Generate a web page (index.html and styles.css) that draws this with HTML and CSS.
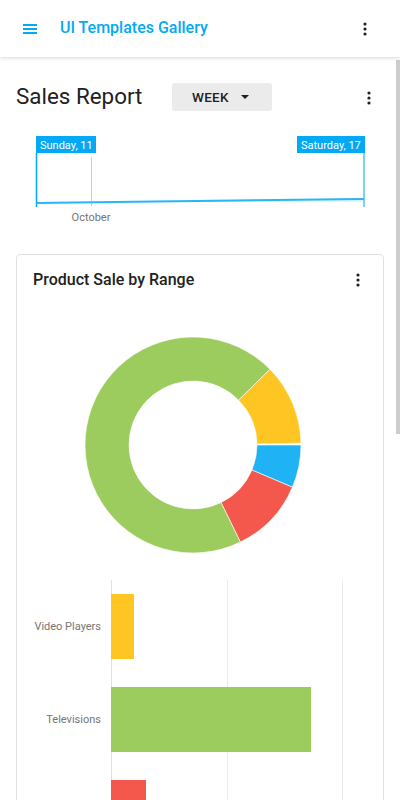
FILE: index.html
```html
<!DOCTYPE html>
<html lang="en">
<head>
<meta charset="utf-8">
<title>UI Templates Gallery</title>
<link rel="stylesheet" href="styles.css">
</head>
<body>
<div class="page">
  <header class="appbar">
    <svg class="menu-icon" width="14" height="10" viewBox="0 0 14 10"><rect x="0" y="0" width="14" height="2" fill="#03a9f4"/><rect x="0" y="4" width="14" height="2" fill="#03a9f4"/><rect x="0" y="8" width="14" height="2" fill="#03a9f4"/></svg>
    <h1 class="app-title">UI Templates Gallery</h1>
    <svg class="kebab kebab-app" width="4" height="14" viewBox="0 0 4 14"><circle cx="2" cy="2" r="1.6" fill="#212121"/><circle cx="2" cy="7" r="1.6" fill="#212121"/><circle cx="2" cy="12" r="1.6" fill="#212121"/></svg>
  </header>

  <main class="content">
    <div class="report-head">
      <h2 class="report-title">Sales Report</h2>
      <div class="week-btn"><span>WEEK</span><svg width="8" height="4" viewBox="0 0 8 4"><path d="M0 0 L8 0 L4 4 Z" fill="#212121"/></svg></div>
      <svg class="kebab kebab-report" width="4" height="14" viewBox="0 0 4 14"><circle cx="2" cy="2" r="1.6" fill="#212121"/><circle cx="2" cy="7" r="1.6" fill="#212121"/><circle cx="2" cy="12" r="1.6" fill="#212121"/></svg>
    </div>

    <svg class="timeline" width="368" height="100" viewBox="0 0 368 100">
      <line x1="75.5" y1="27" x2="75.5" y2="76" stroke="#cccccc" stroke-width="1"/>
      <path d="M20.5 72 L348 68 L348 72 Z" fill="#e1f5fe"/>
      <line x1="20.5" y1="23" x2="20.5" y2="77" stroke="#03a9f4" stroke-width="1.5"/>
      <line x1="348" y1="23" x2="348" y2="77" stroke="#4fc3f7" stroke-width="1.5"/>
      <path d="M20.5 73 L348 69" stroke="#29b6f6" stroke-width="2" fill="none"/>
      <rect x="20" y="6" width="60" height="17" fill="#03a9f4"/>
      <text x="24" y="18.5" class="tl-label">Sunday, 11</text>
      <rect x="281" y="6" width="68" height="17" fill="#03a9f4"/>
      <text x="285" y="18.5" class="tl-label">Saturday, 17</text>
      <text x="75" y="91" text-anchor="middle" class="tl-axis">October</text>
    </svg>

    <section class="card">
      <div class="card-head">
        <h3 class="card-title">Product Sale by Range</h3>
        <svg class="kebab" width="4" height="14" viewBox="0 0 4 14"><circle cx="2" cy="2" r="1.6" fill="#212121"/><circle cx="2" cy="7" r="1.6" fill="#212121"/><circle cx="2" cy="12" r="1.6" fill="#212121"/></svg>
      </div>

      <svg class="donut" width="366" height="278" viewBox="0 0 366 278">
        <path d="M284,153 A108,108 0 0 1 275.41,195.20 L234.91,178.01 A64,64 0 0 0 240,153 Z" fill="#1fb3f5" stroke="#fff" stroke-width="0.6"/>
        <path d="M275.41,195.20 A108,108 0 0 1 223.34,250.07 L204.06,210.52 A64,64 0 0 0 234.91,178.01 Z" fill="#f4584c" stroke="#fff" stroke-width="0.6"/>
        <path d="M223.34,250.07 A108,108 0 1 1 253.03,77.31 L221.65,108.14 A64,64 0 1 0 204.06,210.52 Z" fill="#9ccb5e" stroke="#fff" stroke-width="0.6"/>
        <path d="M253.03,77.31 A108,108 0 0 1 283.99,151.2 L239.99,151.9 A64,64 0 0 0 221.65,108.14 Z" fill="#ffc623" stroke="#fff" stroke-width="0.6"/>
      </svg>

      <svg class="bars" width="366" height="240" viewBox="0 0 366 240">
        <line x1="94.5" y1="10" x2="94.5" y2="240" stroke="#e0e0e0"/>
        <line x1="210.5" y1="10" x2="210.5" y2="240" stroke="#ebebeb"/>
        <line x1="325.5" y1="10" x2="325.5" y2="240" stroke="#ebebeb"/>
        <rect x="94" y="24" width="23" height="65" fill="#ffc623"/>
        <rect x="94" y="117" width="200" height="65" fill="#9ccb5e"/>
        <rect x="94" y="210" width="35" height="30" fill="#f4584c"/>
        <text x="84" y="60" text-anchor="end" class="bar-label">Video Players</text>
        <text x="84" y="153" text-anchor="end" class="bar-label">Televisions</text>
      </svg>
    </section>
  </main>

  <div class="scroll-thumb"></div>
</div>
</body>
</html>
```

FILE: styles.css
```css
html, body {
  margin: 0;
  padding: 0;
  overflow: hidden;
  background: #ffffff;
}

body {
  font-family: Roboto, "Noto Sans", "Liberation Sans", sans-serif;
  color: #212121;
}

.page {
  position: relative;
  height: 800px;
  overflow: hidden;
}

.appbar {
  position: relative;
  z-index: 1;
  height: 57px;
  display: flex;
  align-items: center;
  padding-left: 23px;
  background: #ffffff;
  box-shadow: 0 1px 4px rgba(0, 0, 0, 0.16);
}

.menu-icon {
  display: block;
  margin-top: 1px;
  margin-right: 23px;
}

.app-title {
  margin: 0;
  font-size: 16px;
  font-weight: 500;
  color: #03a9f4;
  line-height: 20px;
  margin-top: -2px;
}

.kebab {
  display: block;
  flex: none;
}

.kebab-app {
  margin-left: auto;
  margin-right: 33px;
  margin-top: 1px;
}

.content {
  padding: 0 16px;
}

.report-head {
  display: flex;
  align-items: center;
  height: 28px;
  margin-top: 26px;
}

.report-title {
  margin: 0;
  width: 156px;
  flex: none;
  font-size: 22.4px;
  font-weight: 400;
  line-height: 28px;
  color: #212121;
  margin-top: -3px;
}

.week-btn {
  width: 100px;
  height: 28px;
  box-sizing: border-box;
  padding-left: 20px;
  display: flex;
  align-items: center;
  background: #ebebeb;
  border-radius: 3px;
  font-size: 13.5px;
  font-weight: 500;
  letter-spacing: 0.3px;
  color: #212121;
}

.week-btn svg {
  margin-left: 12px;
}

.kebab-report {
  margin-left: auto;
  margin-right: 13px;
  margin-top: 2px;
}

.timeline {
  display: block;
  margin-top: 19px;
}

.tl-label {
  font-size: 11px;
  fill: #ffffff;
  font-family: Roboto, "Liberation Sans", sans-serif;
}

.tl-axis {
  font-size: 11px;
  fill: #757575;
  font-family: Roboto, "Liberation Sans", sans-serif;
}

.card {
  margin-top: 24px;
  border: 1px solid #e0e0e0;
  border-radius: 4px;
  height: 800px;
}

.card-head {
  display: flex;
  align-items: center;
  justify-content: space-between;
  padding: 13px 23px 0 16px;
}

.card-title {
  margin: 0;
  font-size: 16px;
  font-weight: 500;
  line-height: 24px;
  color: #212121;
}

.donut,
.bars {
  display: block;
}

.bar-label {
  font-size: 11px;
  fill: #757575;
  font-family: Roboto, "Liberation Sans", sans-serif;
}

.scroll-thumb {
  position: absolute;
  right: 0;
  top: 60px;
  width: 4px;
  height: 374px;
  background: #cdcdcd;
}
```
